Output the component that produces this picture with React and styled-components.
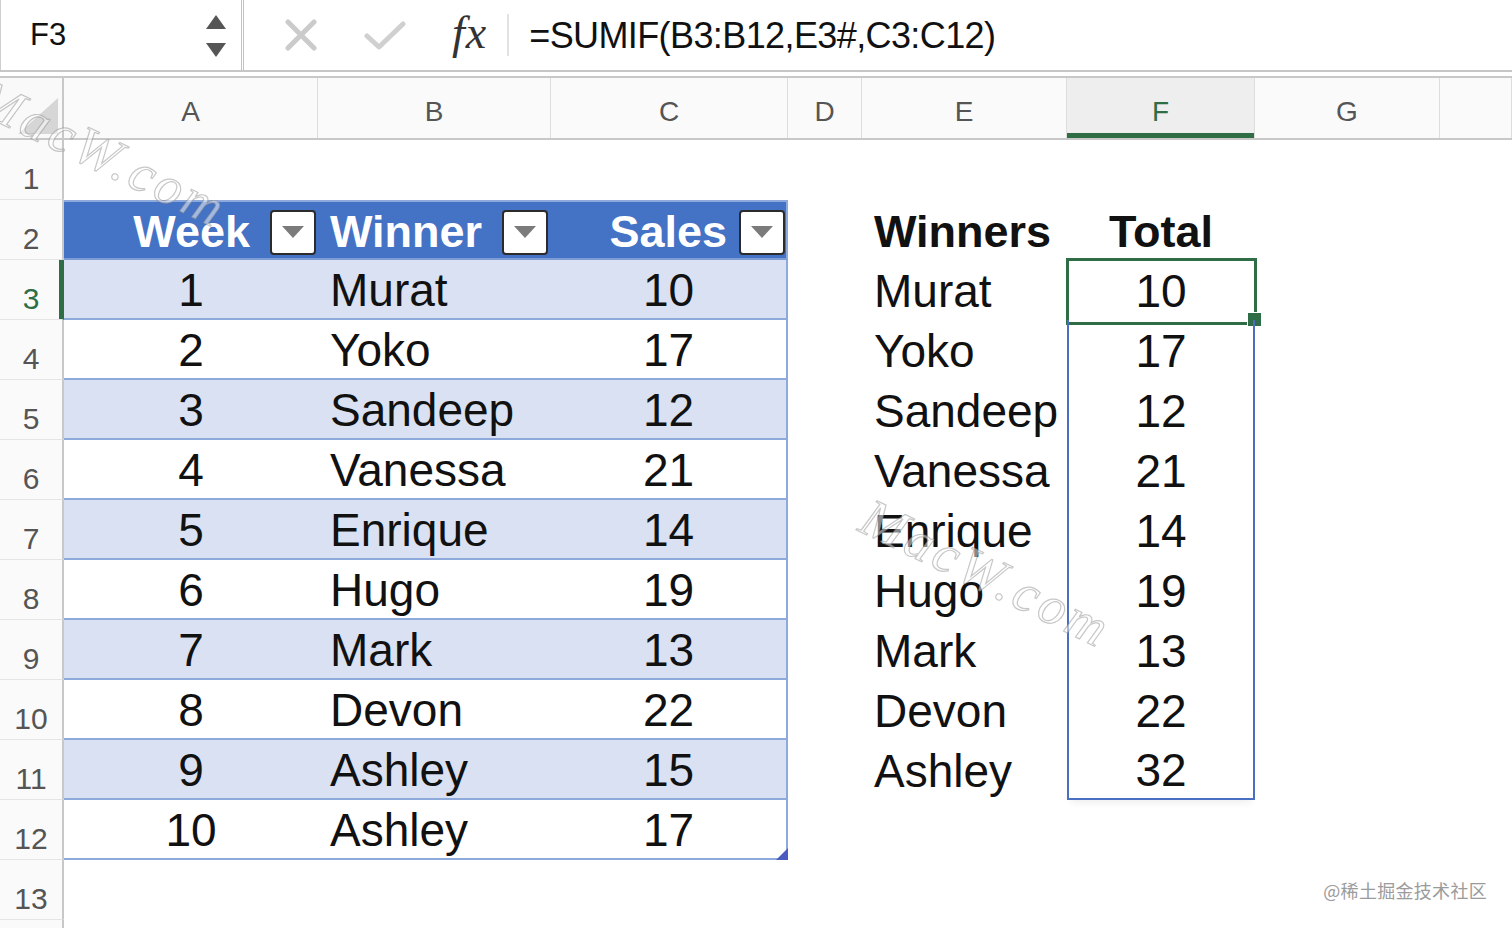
import React from 'react';
import styled, { createGlobalStyle } from 'styled-components';

const GREEN = '#2f6d46';
const BLUE = '#4472c4';
const BAND = '#d9e1f2';
const LINE = '#8ea9db';
const SPILL = '#4a6fc2';
const COLS = '64px 254px 233px 237px 74px 205px 188px 185px 1fr';

const GlobalStyle = createGlobalStyle`
  html, body { margin: 0; padding: 0; background: #ffffff; }
  body { font-family: "Liberation Sans", Arial, sans-serif; overflow: hidden; }
  #root { width: 1512px; height: 928px; position: relative; overflow: hidden; background: #fff; }
`;

const Page = styled.div`
  display: flex;
  flex-direction: column;
  width: 1512px;
  height: 928px;
  position: relative;
  overflow: hidden;
`;

/* ---------- formula bar ---------- */
const FormulaBar = styled.div`
  flex: none;
  display: flex;
  align-items: center;
  height: 70px;
  border-bottom: 2px solid #c6c6c6;
  margin-bottom: 4px;
  box-sizing: content-box;
`;

const NameBox = styled.div`
  box-sizing: border-box;
  width: 244px;
  height: 100%;
  display: flex;
  align-items: center;
  justify-content: space-between;
  padding: 0 14px 0 29px;
  border-left: 1px solid #cfcfcf;
  border-right: 3px double #c2c2c2;
  font-size: 31px;
  color: #111;
`;

const Stepper = styled.div`
  display: flex;
  flex-direction: column;
  gap: 12px;
  margin-top: 2px;
`;

const IconGroup = styled.div`
  display: flex;
  align-items: center;
  padding-left: 40px;
  gap: 46px;
  height: 100%;
`;

const Fx = styled.span`
  font-family: "Liberation Serif", "Times New Roman", serif;
  font-style: italic;
  font-size: 46px;
  line-height: 1.2;
  color: #333;
  margin-top: -4px;
  letter-spacing: 1px;
`;

const BarDivider = styled.span`
  width: 2px;
  height: 42px;
  background: #e2e2e2;
  margin: 0 20px 0 20px;
`;

const FormulaText = styled.span`
  font-size: 36px;
  line-height: 1.2;
  color: #111;
  letter-spacing: -0.6px;
  margin-top: 2px;
`;

/* ---------- column header ---------- */
const ColHeaderRow = styled.div`
  flex: none;
  display: grid;
  grid-template-columns: ${COLS};
  height: 64px;
  box-sizing: border-box;
  border-top: 2px solid #c8c8c8;
  border-bottom: 2px solid #c8c8c8;
`;

const Corner = styled.div`
  position: relative;
  background: #f9f9f9;
  border-right: 2px solid #c8c8c8;
  &::after {
    content: '';
    position: absolute;
    right: 4px;
    bottom: 4px;
    width: 40px;
    height: 36px;
    background: #d6d6d6;
    clip-path: polygon(100% 0, 100% 100%, 0 100%);
  }
`;

const ColHeader = styled.div`
  display: flex;
  align-items: center;
  justify-content: center;
  background: ${p => (p.$active ? '#eeeeee' : '#fafafa')};
  border-right: 1px solid #dddddd;
  font-size: 28px;
  color: ${p => (p.$active ? GREEN : '#555')};
  box-shadow: ${p => (p.$active ? `inset 0 -5px 0 ${GREEN}` : 'none')};
  padding-top: 8px;
`;

/* ---------- sheet rows ---------- */
const SheetRow = styled.div`
  display: grid;
  grid-template-columns: ${COLS};
  height: 60px;
  flex: none;
`;

const RowHeader = styled.div`
  box-sizing: border-box;
  display: flex;
  align-items: flex-end;
  justify-content: center;
  padding-bottom: 4px;
  background: #fafafa;
  border-right: 2px solid ${p => (p.$active ? GREEN : '#c8c8c8')};
  box-shadow: ${p => (p.$active ? `inset -3px 0 0 ${GREEN}` : 'none')};
  border-bottom: 1px solid #e4e4e4;
  font-size: 30px;
  line-height: 32px;
  color: ${p => (p.$active ? GREEN : '#555')};
`;

const Blank = styled.div``;

const TableHead = styled.div`
  box-sizing: border-box;
  display: flex;
  align-items: center;
  justify-content: ${p => p.$justify};
  padding: 4px ${p => p.$pr}px 0 ${p => p.$pl}px;
  background: ${BLUE};
  border-top: 2px solid ${LINE};
  border-bottom: 2px solid #7f9bd6;
  border-right: ${p => (p.$last ? `2px solid ${LINE}` : 'none')};
  color: #fff;
  font-weight: 700;
  font-size: 45px;
  line-height: 1.1;
  white-space: nowrap;
`;

const FilterButton = styled.span`
  box-sizing: border-box;
  flex: none;
  width: 46px;
  height: 45px;
  margin-left: ${p => p.$gap}px;
  background: #fff;
  border: 2px solid #2b2b2b;
  border-radius: 4px;
  display: flex;
  align-items: center;
  justify-content: center;
`;

const TableCell = styled.div`
  box-sizing: border-box;
  display: flex;
  align-items: center;
  justify-content: ${p => (p.$center ? 'center' : 'flex-start')};
  padding: 2px 0 0 ${p => (p.$center ? 0 : 12)}px;
  background: ${p => (p.$band ? BAND : '#fff')};
  border-bottom: 2px solid ${LINE};
  border-right: ${p => (p.$last ? `2px solid ${LINE}` : 'none')};
  font-size: 46px;
  line-height: 1.15;
  color: #111;
  white-space: nowrap;
  position: relative;
`;

const ResizeHandle = styled.span`
  position: absolute;
  right: -2px;
  bottom: -2px;
  width: 12px;
  height: 12px;
  background: #4c5bbf;
  clip-path: polygon(100% 0, 100% 100%, 0 100%);
`;

const SumCell = styled.div`
  box-sizing: border-box;
  display: flex;
  align-items: center;
  justify-content: ${p => (p.$center ? 'center' : 'flex-start')};
  padding: ${p => (p.$head ? 4 : 2)}px 0 0 ${p => (p.$center ? 0 : 12)}px;
  font-size: ${p => (p.$head ? 45 : 46)}px;
  font-weight: ${p => (p.$head ? 700 : 400)};
  line-height: 1.15;
  color: #111;
  white-space: nowrap;
  position: relative;
`;

const SpillCell = styled.div`
  box-sizing: border-box;
  display: flex;
  align-items: center;
  justify-content: center;
  padding-top: 2px;
  border-left: 2px solid ${SPILL};
  border-right: 2px solid ${SPILL};
  border-bottom: ${p => (p.$end ? `2px solid ${SPILL}` : 'none')};
  box-shadow: ${p => (p.$end ? '0 6px 8px -4px rgba(0,0,0,0.08)' : 'none')};
  font-size: 46px;
  line-height: 1.15;
  color: #111;
  position: relative;
`;

const ActiveFrame = styled.span`
  position: absolute;
  top: -2px;
  left: -1px;
  right: -2px;
  bottom: -5px;
  border: 3px solid ${GREEN};
  pointer-events: none;
`;

const FillHandle = styled.span`
  position: absolute;
  right: -7px;
  bottom: -7px;
  width: 13px;
  height: 13px;
  background: ${GREEN};
  border: 1px solid #fff;
`;

/* ---------- overlays ---------- */
const Watermark = styled.span`
  position: absolute;
  left: ${p => p.$x}px;
  top: ${p => p.$y}px;
  transform: rotate(26deg);
  transform-origin: left top;
  font-family: "Liberation Serif", "Times New Roman", serif;
  font-style: italic;
  font-size: 54px;
  letter-spacing: 4px;
  color: rgba(255, 255, 255, 0.5);
  -webkit-text-stroke: 1.2px rgba(130, 130, 130, 0.45);
  pointer-events: none;
  white-space: nowrap;
`;

const Credit = styled.span`
  position: absolute;
  right: 25px;
  bottom: 25px;
  font-family: "Noto Sans CJK SC", "Liberation Sans", sans-serif;
  font-size: 18px;
  color: #9b9b9b;
  letter-spacing: 0.3px;
`;

/* ---------- icons ---------- */
const Tri = ({ up }) => (
  <svg width="22" height="16" viewBox="0 0 22 16">
    <polygon points={up ? '11,1 21,15 1,15' : '1,1 21,1 11,15'} fill="#555" />
  </svg>
);

const CancelIcon = () => (
  <svg width="34" height="32" viewBox="0 0 34 32">
    <path d="M4 3 L30 29 M30 3 L4 29" stroke="#cbcbcb" strokeWidth="5" strokeLinecap="round" />
  </svg>
);

const CheckIcon = () => (
  <svg width="42" height="32" viewBox="0 0 42 32">
    <path d="M3 17 L15 28 L39 5" stroke="#d0d0d0" strokeWidth="5" fill="none" strokeLinecap="round" strokeLinejoin="round" />
  </svg>
);

const FilterArrow = () => (
  <svg width="24" height="14" viewBox="0 0 24 14">
    <polygon points="1,1 23,1 12,13" fill="#7b7b7b" />
  </svg>
);

/* ---------- data ---------- */
const table = [
  [1, 'Murat', 10],
  [2, 'Yoko', 17],
  [3, 'Sandeep', 12],
  [4, 'Vanessa', 21],
  [5, 'Enrique', 14],
  [6, 'Hugo', 19],
  [7, 'Mark', 13],
  [8, 'Devon', 22],
  [9, 'Ashley', 15],
  [10, 'Ashley', 17],
];

const summary = [
  ['Murat', 10],
  ['Yoko', 17],
  ['Sandeep', 12],
  ['Vanessa', 21],
  ['Enrique', 14],
  ['Hugo', 19],
  ['Mark', 13],
  ['Devon', 22],
  ['Ashley', 32],
];

const COLUMNS = ['A', 'B', 'C', 'D', 'E', 'F', 'G', ''];

function renderSumCells(r) {
  if (r === 2) {
    return [
      <SumCell key="e" $head>Winners</SumCell>,
      <SumCell key="f" $head $center>Total</SumCell>,
    ];
  }
  const s = summary[r - 3];
  if (!s) return [<Blank key="e" />, <Blank key="f" />];
  if (r === 3) {
    return [
      <SumCell key="e">{s[0]}</SumCell>,
      <SumCell key="f" $center>
        {s[1]}
        <ActiveFrame />
        <FillHandle />
      </SumCell>,
    ];
  }
  return [
    <SumCell key="e">{s[0]}</SumCell>,
    <SpillCell key="f" $end={r === 11}>{s[1]}</SpillCell>,
  ];
}

function renderTableCells(r) {
  if (r === 2) {
    return [
      <TableHead key="a" $justify="flex-end" $pl={0} $pr={2}>
        Week<FilterButton $gap={20}><FilterArrow /></FilterButton>
      </TableHead>,
      <TableHead key="b" $justify="space-between" $pl={12} $pr={3}>
        Winner<FilterButton $gap={0}><FilterArrow /></FilterButton>
      </TableHead>,
      <TableHead key="c" $justify="flex-end" $pl={0} $pr={1} $last>
        Sales<FilterButton $gap={12}><FilterArrow /></FilterButton>
      </TableHead>,
    ];
  }
  const t = table[r - 3];
  if (!t) return [<Blank key="a" />, <Blank key="b" />, <Blank key="c" />];
  const band = r % 2 === 1;
  return [
    <TableCell key="a" $band={band} $center>{t[0]}</TableCell>,
    <TableCell key="b" $band={band}>{t[1]}</TableCell>,
    <TableCell key="c" $band={band} $center $last>
      {t[2]}
      {r === 12 && <ResizeHandle />}
    </TableCell>,
  ];
}

export default function App() {
  const rows = Array.from({ length: 14 }, (_, i) => i + 1);
  return (
    <Page>
      <GlobalStyle />
      <FormulaBar>
        <NameBox>
          F3
          <Stepper>
            <Tri up />
            <Tri />
          </Stepper>
        </NameBox>
        <IconGroup>
          <CancelIcon />
          <CheckIcon />
          <Fx>fx</Fx>
        </IconGroup>
        <BarDivider />
        <FormulaText>=SUMIF(B3:B12,E3#,C3:C12)</FormulaText>
      </FormulaBar>

      <ColHeaderRow>
        <Corner />
        {COLUMNS.map((c, i) => (
          <ColHeader key={i} $active={c === 'F'}>{c}</ColHeader>
        ))}
      </ColHeaderRow>

      {rows.map(r => (
        <SheetRow key={r}>
          <RowHeader $active={r === 3}>{r <= 13 ? r : ''}</RowHeader>
          {renderTableCells(r)}
          <Blank />
          {renderSumCells(r)}
          <Blank />
          <Blank />
        </SheetRow>
      ))}

      <Watermark $x={-6} $y={66}>MacW.com</Watermark>
      <Watermark $x={878} $y={486}>MacW.com</Watermark>
      <Credit>@稀土掘金技术社区</Credit>
    </Page>
  );
}
